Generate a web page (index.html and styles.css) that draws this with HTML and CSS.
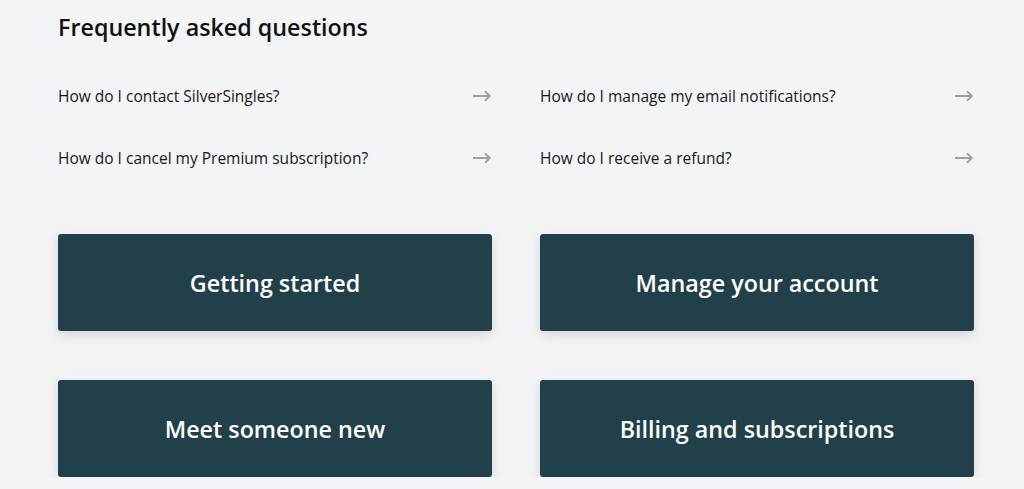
FILE: index.html
```html
<!DOCTYPE html>
<html lang="en">
<head>
<meta charset="utf-8">
<title>Frequently asked questions</title>
<link rel="stylesheet" href="styles.css">
</head>
<body>
<main class="page">
  <h2 class="title">Frequently asked questions</h2>
  <ul class="faq">
    <li class="faq-item"><a href="#">How do I contact SilverSingles?</a><svg class="arrow" viewBox="0 0 18 10" width="18" height="10"><path d="M0 5H16.8M12.6 0.9L16.8 5L12.6 9.1"/></svg></li>
    <li class="faq-item"><a href="#">How do I manage my email notifications?</a><svg class="arrow" viewBox="0 0 18 10" width="18" height="10"><path d="M0 5H16.8M12.6 0.9L16.8 5L12.6 9.1"/></svg></li>
    <li class="faq-item"><a href="#">How do I cancel my Premium subscription?</a><svg class="arrow" viewBox="0 0 18 10" width="18" height="10"><path d="M0 5H16.8M12.6 0.9L16.8 5L12.6 9.1"/></svg></li>
    <li class="faq-item"><a href="#">How do I receive a refund?</a><svg class="arrow" viewBox="0 0 18 10" width="18" height="10"><path d="M0 5H16.8M12.6 0.9L16.8 5L12.6 9.1"/></svg></li>
  </ul>
  <div class="cards">
    <a class="card" href="#">Getting started</a>
    <a class="card" href="#">Manage your account</a>
    <a class="card" href="#">Meet someone new</a>
    <a class="card" href="#">Billing and subscriptions</a>
  </div>
</main>
</body>
</html>
```

FILE: styles.css
```css
* { box-sizing: border-box; }
html, body { margin: 0; padding: 0; }
body {
  background: #f3f4f6;
  font-family: "Open Sans", "Noto Sans", sans-serif;
  color: #151515;
}
.page {
  width: 916px;
  margin-left: 58px;
  padding-top: 12px;
}
.title {
  margin: 0;
  font-size: 23.3px;
  line-height: 31px;
  font-weight: 600;
  color: #111;
}
.faq {
  list-style: none;
  margin: 22px 0 0;
  padding: 0;
  display: grid;
  grid-template-columns: 1fr 1fr;
  column-gap: 48px;
}
.faq-item {
  height: 62px;
  display: flex;
  align-items: center;
  justify-content: space-between;
}
.faq-item a {
  font-size: 15.5px;
  line-height: 20px;
  color: #171717;
  text-decoration: none;
}
.arrow {
  fill: none;
  stroke: #9f9f9f;
  stroke-width: 2;
  stroke-linecap: round;
  stroke-linejoin: round;
  margin-right: 1px;
  margin-top: -1px;
}
.cards {
  margin-top: 45px;
  display: grid;
  grid-template-columns: 1fr 1fr;
  column-gap: 48px;
  row-gap: 49px;
}
.card {
  height: 97px;
  display: flex;
  align-items: center;
  justify-content: center;
  background: #21404a;
  border-radius: 3px;
  box-shadow: 0 4px 12px rgba(0, 0, 0, 0.13);
  color: #fff;
  font-size: 23.3px;
  font-weight: 600;
  text-decoration: none;
}
```
